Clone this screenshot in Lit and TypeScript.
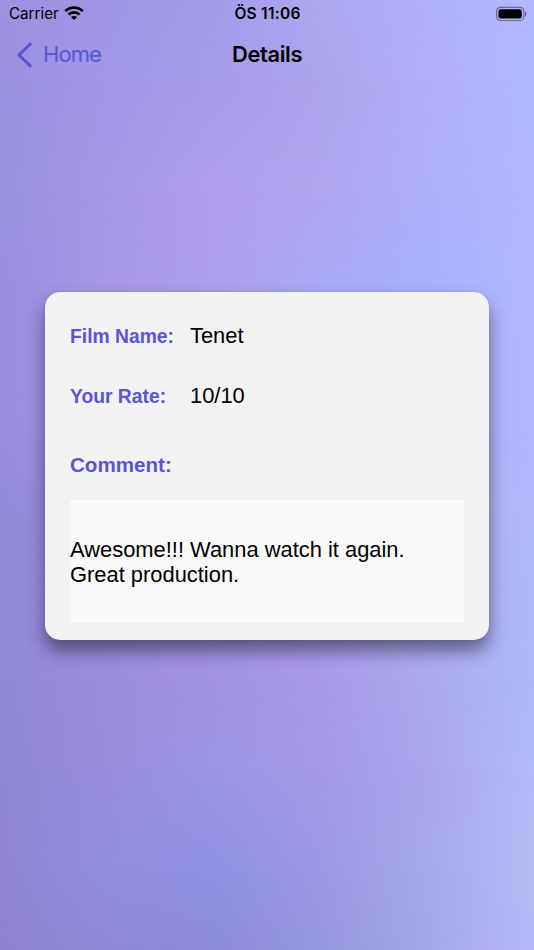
import { LitElement, html, css } from "lit";
import { customElement, property } from "lit/decorators.js";
import { styleMap } from "lit/directives/style-map.js";

@customElement("status-bar")
class StatusBar extends LitElement {
  static styles = css`
    :host {
      display: grid;
      grid-template-columns: 1fr auto 1fr;
      align-items: center;
      height: 28px;
      padding: 0 7px 0 9px;
      font: 400 15.2px/28px Inter, sans-serif;
      color: #000;
    }
    .carrier { display: flex; align-items: center; gap: 5px; }
    .wifi { display: block; width: 20px; height: 15px; margin-top: -2px; }
    .time { font-weight: 600; font-size: 15.5px; letter-spacing: 0.25px; white-space: pre; margin-right: 1px; }
    .battery { display: block; justify-self: end; width: 32px; height: 16px; margin-top: -1px; }
  `;
  render() {
    return html`
      <div class="carrier">
        <span>Carrier</span>
        <svg class="wifi" viewBox="0 0 20 15" fill="none" stroke="#000" stroke-width="2.7">
          <path d="M1.3 5.1C6.1.5 13.9.5 18.7 5.1" />
          <path d="M4.5 8.5C7.5 5.6 12.5 5.6 15.5 8.5" />
          <path d="M10 14.1 6.9 11C8.7 9.5 11.3 9.5 13.1 11Z" fill="#000" stroke="none" />
        </svg>
      </div>
      <span class="time">ÖS 11:06</span>
      <svg class="battery" viewBox="0 0 32 16">
        <rect x="1.6" y="1.3" width="27.2" height="13.2" rx="4" fill="none" stroke="#000" stroke-opacity=".42" stroke-width="1.2" />
        <rect x="3.4" y="3.2" width="23.4" height="9.4" rx="2.3" />
        <path d="M30 5.6c1.9.6 1.9 4.2 0 4.8Z" fill-opacity=".45" />
      </svg>
    `;
  }
}

@customElement("nav-bar")
class NavBar extends LitElement {
  @property() back = "";
  @property() heading = "";
  static styles = css`
    :host {
      display: grid;
      grid-template-columns: 1fr auto 1fr;
      align-items: center;
      height: 53px;
      padding: 0 16px;
      font: 400 22px/53px Inter, sans-serif;
    }
    .back { display: flex; align-items: center; gap: 10px; color: #5856d6; }
    .chevron { display: block; width: 17px; height: 26px; }
    .label { letter-spacing: -0.9px; }
    .heading { font-weight: 600; color: #000; letter-spacing: -0.4px; }
  `;
  render() {
    return html`
      <div class="back">
        <svg class="chevron" viewBox="0 0 17 26" fill="none" stroke="currentColor" stroke-width="3" stroke-linecap="round" stroke-linejoin="round">
          <path d="M14.2 2.2 3 13 14.2 23.8" />
        </svg>
        <span class="label">${this.back}</span>
      </div>
      <span class="heading">${this.heading}</span>
    `;
  }
}

@customElement("film-card")
class FilmCard extends LitElement {
  @property() film = "";
  @property() rate = "";
  @property() comment = "";
  static styles = css`
    :host {
      display: block;
      box-sizing: border-box;
      height: 348px;
      padding: 24px 25px 0;
      border-radius: 15px;
      background: #f2f2f2;
      box-shadow: 0 11px 18px rgba(0, 0, 0, 0.45), 0 0 1px rgba(60, 50, 110, 0.35);
      font: 400 21.9px/25px "Liberation Sans", Arial, sans-serif;
      color: #000;
    }
    .row { display: grid; grid-template-columns: 120px 1fr; align-items: baseline; height: 40px; line-height: 40px; }
    .row + .row { margin-top: 20px; }
    .label { color: #5856d6; font-weight: 700; font-size: 19.3px; }
    .title { margin-top: 30px; height: 38px; line-height: 38px; color: #5856d6; font-weight: 700; font-size: 20.6px; }
    .comment { display: flex; align-items: center; box-sizing: border-box; margin-top: 16px; padding-top: 2px; height: 123px; background: #f9f9f9; white-space: pre-line; }
  `;
  render() {
    return html`
      <div class="row"><span class="label">Film Name:</span><span>${this.film}</span></div>
      <div class="row"><span class="label">Your Rate:</span><span>${this.rate}</span></div>
      <div class="title">Comment:</div>
      <div class="comment"><span>${this.comment}</span></div>
    `;
  }
}

// Horizontal colour bands; each one fades in over the band above it.
const BANDS: { y: number; colors: string[] }[] = [
  { y: 0, colors: ["#a091e0", "#a095e6", "#a39ce9", "#aea8f2", "#b0b0fc", "#b3b8ff"] },
  { y: 80, colors: ["#9a8fe0", "#a196e8", "#a69ceb", "#ada3ee", "#b2aff9", "#b0b9ff"] },
  { y: 190, colors: ["#9991e0", "#a697e8", "#b09fee", "#b0a5f1", "#aeaffa", "#b2b7ff"] },
  { y: 280, colors: ["#9a8de0", "#a797e8", "#ae9eee", "#a9a9f7", "#a7b0ff", "#b3b8ff"] },
  { y: 430, colors: ["#998ddf", "#a092e3", "#a89ceb", "#aaa2f1", "#aeb0fa", "#b3b5ff"] },
  { y: 520, colors: ["#9289d9", "#9b8ee0", "#a496e6", "#aa9fee", "#adadf6", "#b2b8fd"] },
  { y: 680, colors: ["#9188d8", "#9c8cde", "#a292e2", "#a999e9", "#aba9f0", "#adb9fb"] },
  { y: 770, colors: ["#9086d6", "#988cdd", "#9c95e6", "#a499e8", "#aaa5ef", "#b3bbf8"] },
  { y: 870, colors: ["#9084d4", "#928ee0", "#8f91e5", "#9c98e5", "#a5a9ec", "#b6bbf5"] },
  { y: 950, colors: ["#8e82d2", "#9088d8", "#8c8bdb", "#9597df", "#a4a6eb", "#b6b8f7"] },
];

@customElement("color-wash")
class ColorWash extends LitElement {
  static styles = css`
    :host { display: grid; }
    .band { grid-area: 1 / 1; }
  `;
  render() {
    return BANDS.map((band, i) => {
      const fade = i
        ? `linear-gradient(180deg, transparent ${BANDS[i - 1].y}px, #000 ${band.y}px)`
        : "none";
      return html`<div
        class="band"
        style=${styleMap({
          background: `linear-gradient(90deg, ${band.colors.join(", ")})`,
          maskImage: fade,
        })}
      ></div>`;
    });
  }
}

@customElement("app-root")
class AppRoot extends LitElement {
  static styles = css`
    :host { display: grid; grid-template: 950px / 1fr; overflow: hidden; }
    .wash, .screen { grid-area: 1 / 1; }
    .screen { display: flex; flex-direction: column; z-index: 1; }
    .content { padding: 210.5px 45px 0; }
  `;
  render() {
    return html`
      <color-wash class="wash"></color-wash>
      <div class="screen">
        <status-bar></status-bar>
        <nav-bar back="Home" heading="Details"></nav-bar>
        <main class="content">
          <film-card
            film="Tenet"
            rate="10/10"
            comment=${"Awesome!!! Wanna watch it again.\nGreat production."}
          ></film-card>
        </main>
      </div>
    `;
  }
}
